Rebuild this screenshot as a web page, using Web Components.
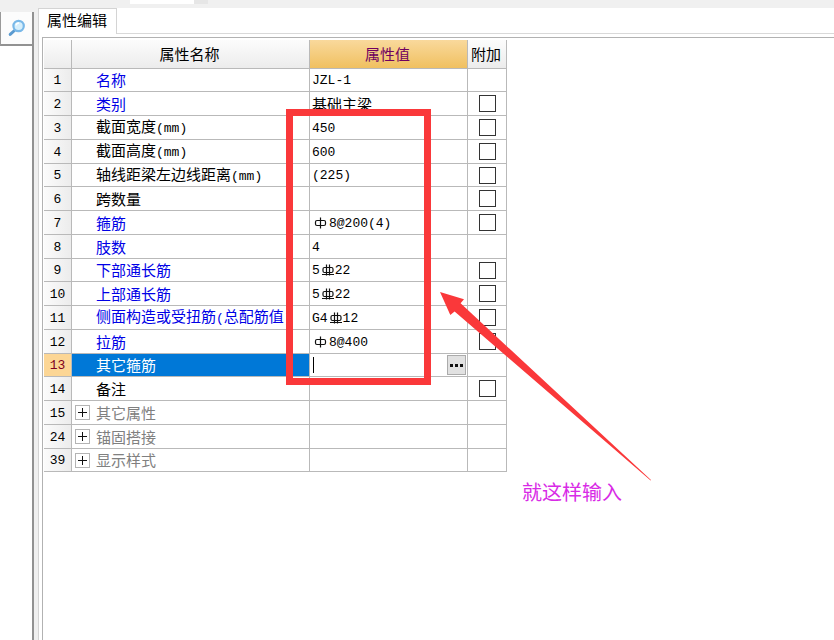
<!DOCTYPE html>
<html lang="zh-CN">
<head>
<meta charset="utf-8">
<title>属性编辑</title>
<style>
  html, body { margin: 0; min-height: 100%; background: #fff; }
  body { font: 15px/20px "Noto Sans CJK SC", sans-serif; color: #000; }
</style>
</head>
<body>
<app-shell>
  <side-rail slot="rail"></side-rail>
  <tab-panel heading="属性编辑">
    <property-grid></property-grid>
    <mark-overlay note="就这样输入"></mark-overlay>
  </tab-panel>
</app-shell>

<script>
class AppShell extends HTMLElement {
  constructor() {
    super();
    this.attachShadow({ mode: 'open' }).innerHTML = `
      <style>
        :host { display: flex; flex-direction: column; min-height: 100vh; }
        .bar { height: 8px; background: #f0f0f0; padding-left: 130px; }
        .chip { width: 64px; height: 4px; background: #fff; border-right: 14px solid #e6e6e6; }
        .body { flex: 1; display: flex; background: #f0f0f0; }
        ::slotted(tab-panel) { flex: 1; min-width: 0; }
      </style>
      <div class="bar"><div class="chip"></div></div>
      <div class="body"><slot name="rail"></slot><slot></slot></div>`;
  }
}

class SideRail extends HTMLElement {
  constructor() {
    super();
    this.attachShadow({ mode: 'open' }).innerHTML = `
      <style>
        :host { display: flex; flex-direction: column; flex: none; width: 34px; box-sizing: border-box;
                margin-top: 4px; background: #fff; border-right: 2px solid #929292; }
        button { height: 34px; margin: 0; padding: 0; background: #fcfcfc; border: 0;
                 border-left: 1px solid #9a9a9a; border-bottom: 2px solid #929292;
                 display: flex; align-items: center; justify-content: center; }
        svg { display: block; }
      </style>
      <button type="button" aria-label="搜索">
        <svg width="18" height="18" viewBox="0 0 18 18" fill="none">
          <path d="M6.5 11.5 2.2 15.4" stroke="#5b9bd0" stroke-width="3" stroke-linecap="round"/>
          <circle cx="10.6" cy="7" r="5.2" fill="#d6effc" stroke="#79b8e8" stroke-width="2.2"/>
          <path d="M8 6.4a3 3 0 0 1 3-2.4" stroke="#fff" stroke-width="1.4"/>
        </svg>
      </button>`;
  }
}

class TabPanel extends HTMLElement {
  constructor() {
    super();
    this.attachShadow({ mode: 'open' }).innerHTML = `
      <style>
        :host { display: flex; flex-direction: column; margin-left: 4px; background: #fff;
                border-left: 1px solid #d4d4d4; }
        .tabs { display: flex; height: 26px; }
        button { font: inherit; line-height: 20px; color: inherit; background: #fff; margin: 0; padding: 0 9px 4px 8px;
                 border: 1px solid #d4d4d4; border-left: 0; border-bottom: 0; }
        .rest { flex: 1; border-bottom: 1px solid #d9d9d9; }
        .pane { flex: 1; position: relative; margin: 3px 0 0 3px; padding: 2px 0 0 1px;
                border: solid #b2b2b2; border-width: 1px 0 0 1px; }
      </style>
      <div class="tabs" role="tablist"><button type="button" role="tab" aria-selected="true"></button><div class="rest"></div></div>
      <div class="pane"><slot></slot></div>`;
    this.shadowRoot.querySelector('button').textContent = this.getAttribute('heading');
  }
}

/* Rebar grade symbols: {1} plain bar, {3} ribbed bar */
const SYMBOLS = {
  '{1}': '<svg class="sym lead" width="15" height="14" viewBox="0 0 15 14" role="img" aria-label="一级钢"><g fill="none" stroke="#111" stroke-width="1.2"><rect x="2.5" y="4.5" width="10" height="5" rx="1.5"/><path d="M7.5 1.5v11"/></g></svg>',
  '{3}': '<svg class="sym" width="15" height="14" viewBox="0 0 15 14" role="img" aria-label="三级钢"><g fill="none" stroke="#111" stroke-width="1.2"><rect x="3" y="4.5" width="10" height="5" rx="1.5"/><path d="M6.5 1.5v11M9.5 1.5v11M2 11.5h12"/></g></svg>'
};
const ROWS = [
  { n: 1, name: '名称', blue: 1, value: 'JZL-1', nobox: 1 },
  { n: 2, name: '类别', blue: 1, value: '基础主梁', cjk: 1 },
  { n: 3, name: '截面宽度<i>(mm)</i>', value: '450' },
  { n: 4, name: '截面高度<i>(mm)</i>', value: '600' },
  { n: 5, name: '轴线距梁左边线距离<i>(mm)</i>', value: '(225)' },
  { n: 6, name: '跨数量', value: '' },
  { n: 7, name: '箍筋', blue: 1, value: '{1}8@200(4)' },
  { n: 8, name: '肢数', blue: 1, value: '4', nobox: 1 },
  { n: 9, name: '下部通长筋', blue: 1, value: '5{3}22' },
  { n: 10, name: '上部通长筋', blue: 1, value: '5{3}22' },
  { n: 11, name: '侧面构造或受扭筋<i>(</i>总配筋值<i>)</i>', blue: 1, value: 'G4{3}12' },
  { n: 12, name: '拉筋', blue: 1, value: '{1}8@400' },
  { n: 13, name: '其它箍筋', edit: 1, value: '', nobox: 1 },
  { n: 14, name: '备注', value: '' },
  { n: 15, name: '其它属性', group: 1, value: '', nobox: 1 },
  { n: 24, name: '锚固搭接', group: 1, value: '', nobox: 1 },
  { n: 39, name: '显示样式', group: 1, value: '', nobox: 1 }
];

class PropertyGrid extends HTMLElement {
  constructor() {
    super();
    const row = r => {
      const plain = r.name.replace(/<[^>]+>/g, '');
      const value = r.edit
        ? `<div class="edit"><span class="caret"></span><input type="text" aria-label="${plain}"><button class="more" type="button" aria-label="更多"><b></b><b></b><b></b></button></div>`
        : r.value.replace(/\{\d\}/g, m => SYMBOLS[m]);
      return `<tr class="${r.blue ? 'blue' : ''}${r.edit ? 'sel' : ''}${r.group ? 'group' : ''}">
        <th scope="row">${r.n}</th>
        <td><div class="name">${r.group ? `<button class="plus" type="button" aria-label="展开${plain}"></button>` : ''}<span>${r.name}</span></div></td>
        <td class="value ${r.cjk ? 'cjk' : ''}">${value}</td>
        <td class="tick">${r.nobox ? '' : `<input type="checkbox" aria-label="附加 ${plain}">`}</td></tr>`;
    };
    this.attachShadow({ mode: 'open' }).innerHTML = `
      <style>
        :host { display: block; }
        table { table-layout: fixed; width: 463px; border-collapse: separate; border-spacing: 0; }
        .c1 { width: 28px; } .c2 { width: 238px; } .c3 { width: 158px; } .c4 { width: 39px; }
        th, td { box-sizing: border-box; padding: 0; border: solid #b9b9b9; border-width: 0 1px 1px 0;
                 font-weight: 400; white-space: nowrap; overflow: hidden; vertical-align: middle; }
        thead tr { height: 29px; }
        thead th { padding-right: 2px; background: linear-gradient(#fcfcfc, #ececec); }
        thead .hot { background: linear-gradient(#f9d99c, #f0c060); color: #700060; }
        tbody tr { height: 24px; }
        tbody tr:nth-child(4n+1) { height: 23px; }
        tbody th, .value, i { font-family: "Liberation Mono", "Noto Sans CJK SC", monospace; font-size: 13px; font-style: normal; }
        tbody th { padding-top: 2px; background: linear-gradient(90deg, #fbfbfb, #ececec); line-height: 16px; }
        td { line-height: 20px; }
        .name { display: flex; align-items: center; height: 20px; padding: 0 0 0 24px; box-sizing: border-box; }
        .blue .name { color: #0000e6; }
        .group .name { color: #808080; padding-left: 3px; gap: 6px; }
        .value { padding: 2px 0 0 2px; }
        .value.cjk { font: inherit; line-height: 20px; padding-top: 0; }
        .sym { vertical-align: -3px; }
        .lead { margin: 0 1px; }
        .sel th { background: #fcd695; color: #800020; }
        .sel td:nth-child(2) { background: #0078d7; color: #fff; }
        .sel .value { padding-top: 0; }
        .plus { width: 15px; height: 15px; padding: 0; border: 1px solid #b4b4b4;
                background: linear-gradient(#111, #111) center / 9px 1px no-repeat,
                            linear-gradient(#111, #111) center / 1px 9px no-repeat, #fff; }
        .tick { line-height: 0; text-align: center; }
        .tick input { appearance: none; width: 17px; height: 17px; margin: 0; border: 1px solid #333; background: #fff; }
        .edit { display: flex; align-items: center; height: 20px; padding: 0 1px; }
        .caret { width: 1px; height: 16px; background: #000; }
        .edit input { flex: 1; min-width: 0; height: 18px; border: 0; padding: 0; outline: 0; background: none; font: inherit; }
        .more { display: flex; align-items: center; justify-content: center; gap: 2px; width: 19px; height: 20px;
                padding: 0; border: 1px solid #ababab; background: #e1e1e1; }
        .more b { width: 3px; height: 3px; background: #111; }
      </style>
      <table>
        <colgroup><col class="c1"><col class="c2"><col class="c3"><col class="c4"></colgroup>
        <thead><tr><th></th><th scope="col">属性名称</th><th scope="col" class="hot">属性值</th><th scope="col">附加</th></tr></thead>
        <tbody>${ROWS.map(row).join('')}</tbody>
      </table>`;
  }
}

/* Red frame, arrow and note drawn over the pane */
class MarkOverlay extends HTMLElement {
  constructor() {
    super();
    this.attachShadow({ mode: 'open' }).innerHTML = `
      <style>
        :host { position: absolute; inset: 0; pointer-events: none; }
        .frame { position: absolute; left: 243px; top: 71px; width: 131px; height: 262px; border: 7px solid #fa383a; }
        svg { position: absolute; left: 397px; top: 254px; }
        p { position: absolute; left: 479px; top: 440px; margin: 0; font-size: 20px; line-height: 28px; color: #d82be6; white-space: nowrap; }
      </style>
      <div class="frame"></div>
      <svg width="212" height="190" viewBox="0 0 212 190" aria-hidden="true">
        <path fill="#fa383a" d="M0 0 24 7.3 20.6 11.3 211 188 210.6 188.4 14.6 19.4 10.3 23Z"/>
      </svg>
      <p></p>`;
    this.shadowRoot.querySelector('p').textContent = this.getAttribute('note');
  }
}

customElements.define('app-shell', AppShell);
customElements.define('side-rail', SideRail);
customElements.define('tab-panel', TabPanel);
customElements.define('property-grid', PropertyGrid);
customElements.define('mark-overlay', MarkOverlay);
</script>
</body>
</html>
